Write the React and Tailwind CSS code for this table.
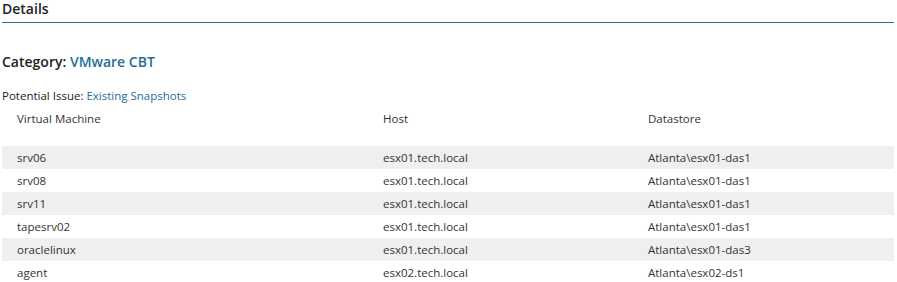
const BLUE = "#266d99";

const rows = [
  { vm: "srv06", host: "esx01.tech.local", ds: "Atlanta\\esx01-das1" },
  { vm: "srv08", host: "esx01.tech.local", ds: "Atlanta\\esx01-das1" },
  { vm: "srv11", host: "esx01.tech.local", ds: "Atlanta\\esx01-das1" },
  { vm: "tapesrv02", host: "esx01.tech.local", ds: "Atlanta\\esx01-das1" },
  { vm: "oraclelinux", host: "esx01.tech.local", ds: "Atlanta\\esx01-das3" },
  { vm: "agent", host: "esx02.tech.local", ds: "Atlanta\\esx02-ds1" },
];

export default function App() {
  return (
    <div
      className="w-[897px] h-[282px] overflow-hidden bg-white pl-[2px] pr-[3px] text-[#333]"
      style={{ fontFamily: '"Segoe UI", "Open Sans", "Noto Sans", sans-serif' }}
    >
      {/* header */}
      <div className="h-[23px] border-b border-[#266d99] flex items-start">
        <h1 className="text-[14px] font-semibold leading-[20px] mt-[-1px] text-[#222]">Details</h1>
      </div>

      <div className="mt-[28px] text-[14px] font-semibold leading-[22px] text-[#222]">
        Category: <span style={{ color: BLUE }}>VMware CBT</span>
      </div>

      <div className="mt-[15px] text-[11.5px] leading-[16px] text-[#222]">
        Potential Issue: <span style={{ color: BLUE }}>Existing Snapshots</span>
      </div>

      {/* table */}
      <div className="text-[11.5px]">
        <div className="grid grid-cols-[366px_265px_1fr] h-[42px] items-start pt-[7px] leading-[16px]">
          <div className="px-[15px]">Virtual Machine</div>
          <div className="px-[15px]">Host</div>
          <div className="px-[15px]">Datastore</div>
        </div>
        {rows.map((r, i) => (
          <div
            key={r.vm}
            className={`grid grid-cols-[366px_265px_1fr] h-[23px] items-center leading-[16px] ${i % 2 === 0 ? "bg-[#efefef]" : "bg-white"}`}
          >
            <div className="px-[15px]">{r.vm}</div>
            <div className="px-[15px]">{r.host}</div>
            <div className="px-[15px]">{r.ds}</div>
          </div>
        ))}
      </div>
    </div>
  );
}
